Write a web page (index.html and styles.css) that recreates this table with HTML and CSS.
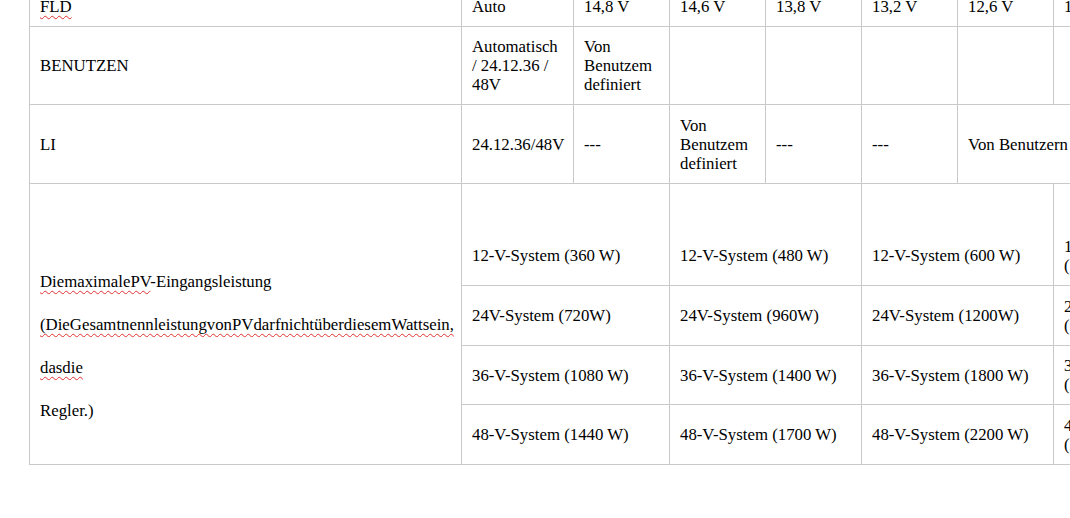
FILE: index.html
```html
<!DOCTYPE html>
<html lang="de">
<head>
<meta charset="utf-8">
<title>Tabelle</title>
<link rel="stylesheet" href="styles.css">
</head>
<body>
<div class="page">
<table class="spec">
  <colgroup>
    <col class="c-label">
    <col class="c-2">
    <col class="c-n">
    <col class="c-n">
    <col class="c-n">
    <col class="c-n">
    <col class="c-n">
    <col class="c-last">
  </colgroup>
  <tr class="r1">
    <td><span class="sp">FLD</span></td>
    <td>Auto</td>
    <td>14,8 V</td>
    <td>14,6 V</td>
    <td>13,8 V</td>
    <td>13,2 V</td>
    <td>12,6 V</td>
    <td>12,0 V</td>
  </tr>
  <tr class="r2">
    <td>BENUTZEN</td>
    <td>Automatisch / 24.12.36 / 48V</td>
    <td>Von Benutzem definiert</td>
    <td></td>
    <td></td>
    <td></td>
    <td></td>
    <td></td>
  </tr>
  <tr class="r3">
    <td>LI</td>
    <td class="nw">24.12.36/48V</td>
    <td>---</td>
    <td>Von Benutzem definiert</td>
    <td>---</td>
    <td>---</td>
    <td colspan="2" class="nw">Von Benutzern definiert</td>
  </tr>
  <tr class="r4">
    <td rowspan="4" class="desc">
      <p><span class="sp">DiemaximalePV</span>-Eingangsleistung</p>
      <p><span class="sp">(DieGesamtnennleistungvonPVdarfnichtüberdiesemWattsein,</span></p>
      <p><span class="sp">dasdie</span></p>
      <p>Regler.)</p>
    </td>
    <td colspan="2" class="lift">12-V-System (360 W)</td>
    <td colspan="2" class="lift">12-V-System (480 W)</td>
    <td colspan="2" class="lift">12-V-System (600 W)</td>
    <td class="lift">12-V-System (720 W)</td>
  </tr>
  <tr class="r5">
    <td colspan="2">24V-System (720W)</td>
    <td colspan="2">24V-System (960W)</td>
    <td colspan="2">24V-System (1200W)</td>
    <td>24V-System (1440W)</td>
  </tr>
  <tr class="r6">
    <td colspan="2">36-V-System (1080 W)</td>
    <td colspan="2">36-V-System (1400 W)</td>
    <td colspan="2">36-V-System (1800 W)</td>
    <td>36-V-System (2160 W)</td>
  </tr>
  <tr class="r7">
    <td colspan="2">48-V-System (1440 W)</td>
    <td colspan="2">48-V-System (1700 W)</td>
    <td colspan="2">48-V-System (2200 W)</td>
    <td>48-V-System (2880 W)</td>
  </tr>
</table>
</div>
</body>
</html>
```
FILE: styles.css
```css
html, body {
  margin: 0;
  padding: 0;
  background: #ffffff;
  overflow: hidden;
}
body {
  width: 1070px;
  height: 518px;
  font-family: "Liberation Serif", "Times New Roman", serif;
  font-size: 16.8px;
  color: #000000;
}
.page {
  padding-left: 29px;
}
.spec {
  border-collapse: collapse;
  table-layout: fixed;
  width: 1142px;
  margin-top: -14px;
}
.c-label { width: 432px; }
.c-2 { width: 112px; }
.c-n { width: 96px; }
.c-last { width: 118px; }
.spec td {
  border: 1px solid #c9c9c9;
  padding: 0 10px 0 10px;
  vertical-align: middle;
  line-height: 19px;
}
.r1 { height: 40px; }
.r2 { height: 78px; }
.r3 { height: 79px; }
.r4 { height: 102px; }
.r5 { height: 60px; }
.r6 { height: 59px; }
.r7 { height: 60px; }
.nw { white-space: nowrap; overflow: hidden; }
.spec td.lift { padding-top: 42px; }
.spec td.desc {
  padding-top: 43px;
}
.desc p {
  margin: 0 0 24px;
  white-space: nowrap;
}
.desc p:last-child { margin-bottom: 0; }
.sp {
  text-decoration: underline wavy #e03030;
  text-decoration-thickness: 1px;
  text-underline-offset: 3px;
  text-decoration-skip-ink: none;
}
```
